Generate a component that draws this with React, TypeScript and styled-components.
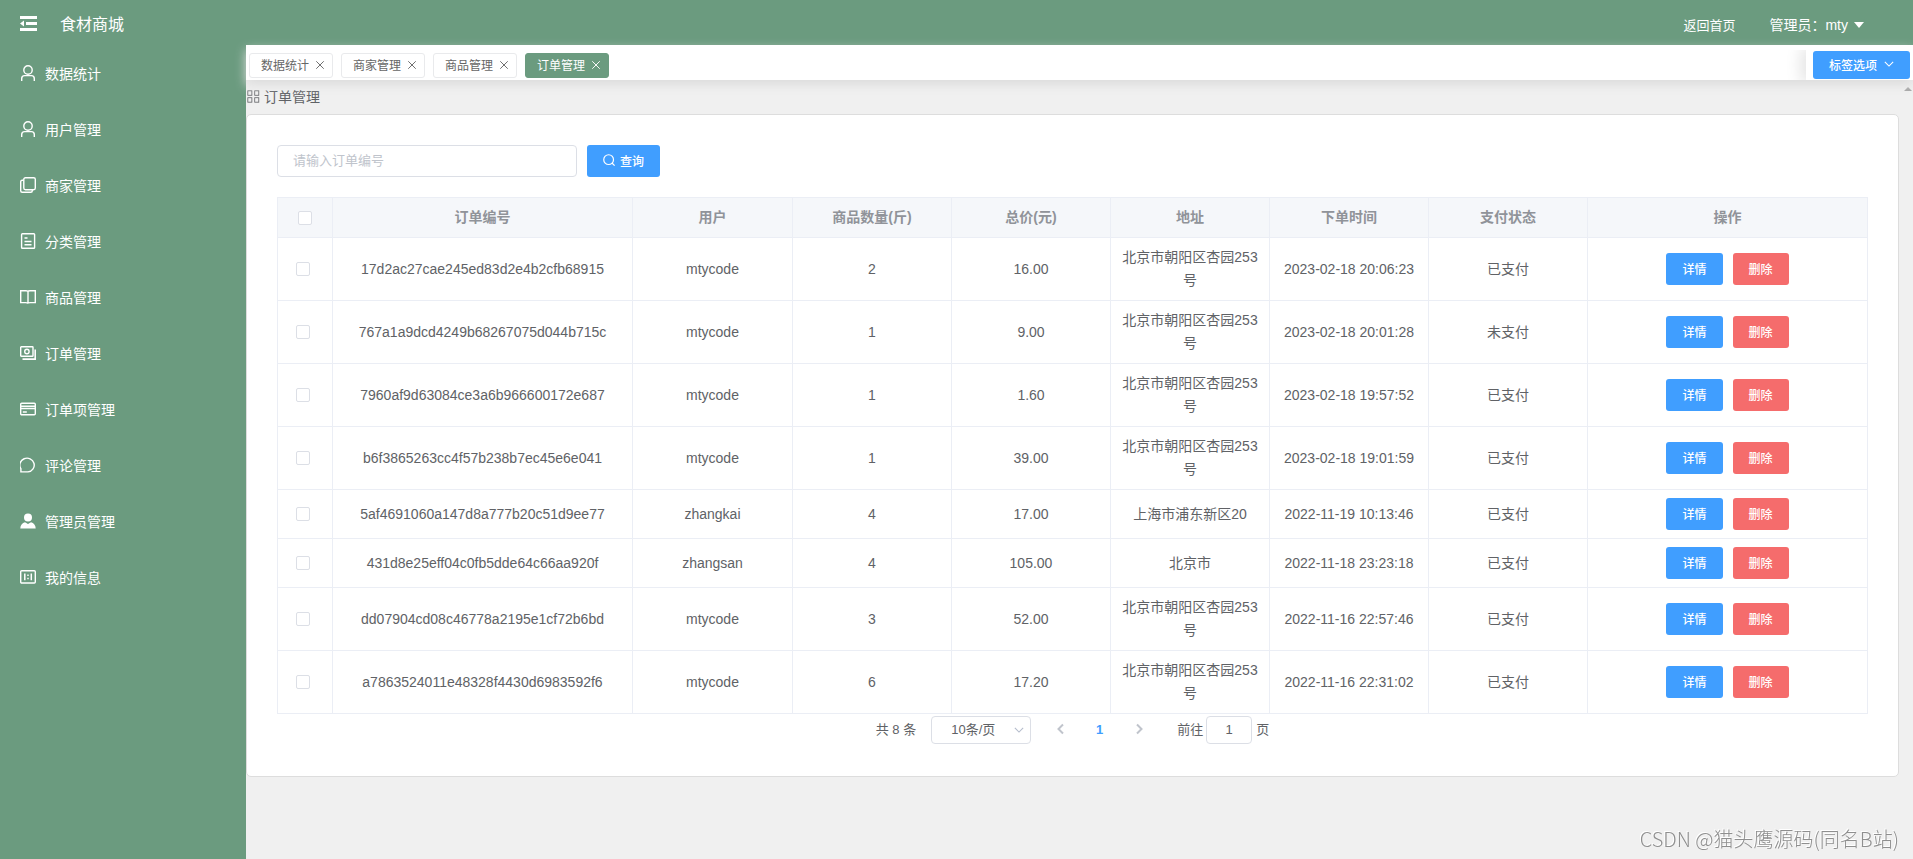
import React from 'react';
import styled, { createGlobalStyle, css } from 'styled-components';

const GREEN = '#6b9b7f';
const BLUE = '#409eff';
const RED = '#f56c6c';
const LINE = '#ebeef5';
const TEXT = '#606266';

const GlobalStyle = createGlobalStyle`
  *, *::before, *::after { box-sizing: border-box; }
  body {
    margin: 0;
    background: #f0f0f0;
    color: ${TEXT};
    font-family: "Liberation Sans", "Noto Sans CJK SC", sans-serif;
    font-size: 14px;
  }
  button, input, select { font-family: inherit; }
  a { color: inherit; text-decoration: none; }
`;

const Page = styled.div`
  display: flex;
  flex-direction: column;
  min-height: 100vh;
`;

const Header = styled.header`
  display: flex;
  align-items: center;
  height: 45px;
  padding: 3px 49px 0 18px;
  background: ${GREEN};
  color: #fff;
`;

const IconButton = styled.button`
  display: flex;
  padding: 0;
  border: 0;
  background: none;
  color: inherit;
  cursor: pointer;
`;

const Brand = styled.h1`
  flex: 1;
  margin: 0;
  padding: 2px 0 0 22px;
  font-size: 16px;
  font-weight: 400;
  line-height: 24px;
`;

const HomeLink = styled.a`
  margin-right: 34px;
  font-size: 13px;
`;

const UserMenu = styled.button`
  display: flex;
  align-items: center;
  gap: 6px;
  padding: 0;
  border: 0;
  background: none;
  color: #fff;
  font-size: 14px;
  cursor: pointer;
  svg { margin-top: 2px; }
`;

const Body = styled.div`
  display: flex;
  flex: 1;
`;

const Sidebar = styled.nav`
  flex: none;
  width: 246px;
  background: ${GREEN};
`;

const MenuLink = styled.a`
  display: flex;
  align-items: center;
  gap: 9px;
  height: 56px;
  padding-left: 20px;
  color: #fff;
  font-size: 14px;
`;

const Main = styled.main`
  flex: 1;
  min-width: 0;
`;

const TagsBar = styled.div`
  position: relative;
  display: flex;
  justify-content: space-between;
  height: 35px;
  padding-top: 5px;
  background: #fff;
  box-shadow: 0 5px 10px #ddd;
`;

const TagList = styled.ul`
  display: flex;
  gap: 8px;
  margin: 0;
  padding: 3px;
  list-style: none;
`;

const Tag = styled.li<{ $active?: boolean }>`
  display: flex;
  align-items: center;
  gap: 6px;
  width: 84px;
  height: 25px;
  padding: 0 0 2px 11px;
  border: 1px solid ${(p) => (p.$active ? GREEN : '#e9eaec')};
  border-radius: 3px;
  background: ${(p) => (p.$active ? GREEN : '#fff')};
  color: ${(p) => (p.$active ? '#fff' : '#666')};
  font-size: 12px;
  white-space: nowrap;
`;

const TagOptions = styled.div`
  padding: 1px 3px 1px 7px;
  background: #fff;
  box-shadow: -3px 0 15px 3px rgba(0, 0, 0, 0.1);
  clip-path: inset(0 0 0 -30px);
`;

const Button = styled.button<{ $color?: string; $compact?: boolean }>`
  display: inline-flex;
  align-items: center;
  justify-content: center;
  gap: ${(p) => (p.$compact ? 7 : 5)}px;
  height: ${(p) => (p.$compact ? 28 : 32)}px;
  padding: 0 16px 2px;
  border: 0;
  border-radius: 3px;
  background: ${(p) => p.$color ?? BLUE};
  color: #fff;
  font-size: 12px;
  font-weight: 500;
  white-space: nowrap;
  cursor: pointer;
`;

const Content = styled.div`
  display: grid;
  grid-template-columns: minmax(0, 1fr) 14px;
`;

const Crumb = styled.div`
  display: flex;
  align-items: center;
  gap: 4px;
  height: 34px;
  padding: 0 1px 2px;
  font-size: 14px;
`;

const ScrollCap = styled.div`
  padding: 7px 2px 0 5px;
  color: #a3a3a3;
  svg { display: block; }
`;

const Card = styled.section`
  padding: 30px;
  border: 1px solid #ddd;
  border-radius: 5px;
  background: #fff;
`;

const SearchForm = styled.form`
  display: flex;
  gap: 10px;
  margin-bottom: 20px;
`;

const field = css`
  border: 1px solid #dcdfe6;
  border-radius: 4px;
  background: #fff;
  color: ${TEXT};
  font-size: 13px;
  outline: none;
`;

const SearchInput = styled.input`
  ${field}
  width: 300px;
  height: 32px;
  padding: 0 15px 2px;
  &::placeholder { color: #c0c4cc; }
`;

const Table = styled.table`
  width: 100%;
  table-layout: fixed;
  border-collapse: separate;
  border-spacing: 0;
  border: solid ${LINE};
  border-width: 1px 0 0 1px;
  font-size: 14px;
`;

const cell = css`
  padding: 8px 10px;
  border: solid ${LINE};
  border-width: 0 1px 1px 0;
  line-height: 23px;
  text-align: center;
`;

const Th = styled.th`
  ${cell}
  background: #f5f7fa;
  color: #909399;
  font-weight: 700;
`;

const Td = styled.td`
  ${cell}
  overflow-wrap: anywhere;
`;

const CheckTd = styled(Td)`
  padding-right: 14px;
`;

const Check = styled.input`
  display: block;
  width: 14px;
  height: 14px;
  margin: 0 auto;
  border: 1px solid #dcdfe6;
  border-radius: 2px;
  background: #fff;
  appearance: none;
`;

const Actions = styled.div`
  display: flex;
  justify-content: center;
  gap: 10px;
`;

const Pager = styled.div`
  display: flex;
  align-items: center;
  justify-content: center;
  height: 32px;
  padding: 2px 5px;
  font-size: 13px;
`;

const Total = styled.span`
  margin-right: 15px;
  padding-bottom: 3px;
`;

const SizeBox = styled.span`
  ${field}
  display: flex;
  align-items: center;
  width: 100px;
  height: 28px;
  margin-right: 11px;
  padding-right: 6px;
  color: #b4bccc;
`;

const SizeSelect = styled.select`
  flex: 1;
  min-width: 0;
  height: 26px;
  padding: 0 0 2px 19px;
  border: 0;
  background: none;
  color: ${TEXT};
  font-size: 13px;
  appearance: none;
  outline: none;
`;

const PageButton = styled.button<{ $active?: boolean }>`
  display: flex;
  align-items: center;
  justify-content: center;
  width: 39px;
  height: 28px;
  padding: 0 2px 2px 0;
  border: 0;
  background: none;
  color: ${(p) => (p.$active ? BLUE : '#c0c4cc')};
  font-size: 13px;
  font-weight: 700;
`;

const Jump = styled.label`
  display: flex;
  align-items: center;
  margin-left: 18px;
`;

const JumpText = styled.span`
  padding-bottom: 3px;
`;

const JumpInput = styled.input`
  ${field}
  width: 46px;
  height: 28px;
  margin: 0 4px 0 3px;
  padding: 0 0 2px;
  text-align: center;
`;

const Watermark = styled.div`
  position: fixed;
  right: 14px;
  bottom: 6px;
  color: #8f8f8f;
  font-family: "Noto Sans CJK SC", sans-serif;
  font-size: 20px;
  font-weight: 300;
  line-height: 28px;
  text-shadow: -1px -1px 0 #fff;
`;

type IconName =
  | 'user' | 'copy' | 'tickets' | 'book' | 'money' | 'card'
  | 'chat' | 'custom' | 'scale' | 'grid' | 'search' | 'close';

const shapes: Record<IconName, React.ReactNode> = {
  user: (
    <>
      <circle cx="8" cy="5" r="4.200" />
      <path d="M1.700 16v-2.500q0-2.900 2.900-2.900h6.800q2.900 0 2.900 2.900V16" />
    </>
  ),
  copy: (
    <>
      <rect x="3.800" y=".7" width="11.500" height="12" rx="1.600" />
      <path d="M3.500 3.300H2.200Q.7 3.300.7 4.800v9q0 1.500 1.500 1.500h8.600q1.500 0 1.500-1.500v-1" />
    </>
  ),
  tickets: (
    <>
      <rect x="1.600" y=".7" width="13" height="14.600" rx=".8" />
      <path d="M4.500 5h3M4.500 8.500h7M4.500 11.800h7" />
    </>
  ),
  book: (
    <path d="M8 2.800v11.500M.7 1.700H6q2 0 2 1.100 0-1.100 2-1.100h5.300v11.900H10q-2 0-2 1-.1-1-2-1H.7z" />
  ),
  money: (
    <>
      <rect x=".7" y="1.700" width="12.300" height="9.600" rx=".6" />
      <circle cx="6.900" cy="6.500" r="2.200" />
      <path d="M15.200 4.500v9.600H2.500" strokeWidth="1.600" />
    </>
  ),
  card: (
    <>
      <rect x=".7" y="2.200" width="14.600" height="11.600" rx="1" />
      <path d="M.6 5.300h14.800M.6 7.500h14.800M2.800 11h4" />
    </>
  ),
  chat: <path d="M.9 14.900v-3.200A7.200 6.900 0 1 1 8 14.900z" />,
  custom: (
    <>
      <circle cx="8" cy="4.500" r="4" fill="currentColor" stroke="none" />
      <path d="M.3 15.500c0-3.500 1.900-5.500 4.700-6.300L8 11l3-1.800c2.800.8 4.700 2.800 4.700 6.300z" fill="currentColor" stroke="none" />
    </>
  ),
  scale: (
    <>
      <rect x=".7" y="1.800" width="14.600" height="12.200" rx="1" />
      <path d="M4.800 4.500v6.800M11.300 4.500v6.800M8 5.500v1.500M8 8.800v1.500" strokeWidth="1.500" />
    </>
  ),
  grid: (
    <>
      <rect x="1" y="1" width="5" height="5.500" />
      <rect x="9.500" y="1" width="5" height="5.500" />
      <rect x="1" y="9.500" width="5" height="5.500" />
      <rect x="9.500" y="9.500" width="5" height="5.500" />
    </>
  ),
  search: (
    <>
      <circle cx="7.500" cy="7.500" r="6.500" />
      <path d="m12 12 3.500 3.500" />
    </>
  ),
  close: <path d="m2 2 12 12M14 2 2 14" />,
};

const Icon = ({ name, size = 16, weight = 1.4 }: { name: IconName; size?: number; weight?: number }) => (
  <svg width={size} height={size} viewBox="0 0 16 16" fill="none" stroke="currentColor" strokeWidth={weight} aria-hidden="true">
    {shapes[name]}
  </svg>
);

const Chevron = ({ to, size, weight = 1.3 }: { to: 'down' | 'left' | 'right'; size: number; weight?: number }) => {
  const d = { down: 'm1 3.500 5 5 5-5', left: 'M8 1.500 3.500 6 8 10.500', right: 'M4 1.500 8.500 6 4 10.500' }[to];
  return (
    <svg width={size} height={size} viewBox="0 0 12 12" fill="none" stroke="currentColor" strokeWidth={weight} aria-hidden="true">
      <path d={d} />
    </svg>
  );
};

const menu: [IconName, string][] = [
  ['user', '数据统计'],
  ['user', '用户管理'],
  ['copy', '商家管理'],
  ['tickets', '分类管理'],
  ['book', '商品管理'],
  ['money', '订单管理'],
  ['card', '订单项管理'],
  ['chat', '评论管理'],
  ['custom', '管理员管理'],
  ['scale', '我的信息'],
];

const tags = ['数据统计', '商家管理', '商品管理', '订单管理'];

const columns = ['订单编号', '用户', '商品数量(斤)', '总价(元)', '地址', '下单时间', '支付状态', '操作'];

const orders = [
  ['17d2ac27cae245ed83d2e4b2cfb68915', 'mtycode', '2', '16.00', '北京市朝阳区杏园253号', '2023-02-18 20:06:23', '已支付'],
  ['767a1a9dcd4249b68267075d044b715c', 'mtycode', '1', '9.00', '北京市朝阳区杏园253号', '2023-02-18 20:01:28', '未支付'],
  ['7960af9d63084ce3a6b966600172e687', 'mtycode', '1', '1.60', '北京市朝阳区杏园253号', '2023-02-18 19:57:52', '已支付'],
  ['b6f3865263cc4f57b238b7ec45e6e041', 'mtycode', '1', '39.00', '北京市朝阳区杏园253号', '2023-02-18 19:01:59', '已支付'],
  ['5af4691060a147d8a777b20c51d9ee77', 'zhangkai', '4', '17.00', '上海市浦东新区20', '2022-11-19 10:13:46', '已支付'],
  ['431d8e25eff04c0fb5dde64c66aa920f', 'zhangsan', '4', '105.00', '北京市', '2022-11-18 23:23:18', '已支付'],
  ['dd07904cd08c46778a2195e1cf72b6bd', 'mtycode', '3', '52.00', '北京市朝阳区杏园253号', '2022-11-16 22:57:46', '已支付'],
  ['a7863524011e48328f4430d6983592f6', 'mtycode', '6', '17.20', '北京市朝阳区杏园253号', '2022-11-16 22:31:02', '已支付'],
];

export default function App() {
  return (
    <Page>
      <GlobalStyle />
      <Header>
        <IconButton type="button" aria-label="折叠菜单">
          <svg width="20" height="16" viewBox="0 0 20 16" fill="currentColor" aria-hidden="true">
            <path d="M2 0h17v3H2zM8 6h11v3H8zM2 12h17v3H2zM2 7.500 6 4.500v6z" />
          </svg>
        </IconButton>
        <Brand>食材商城</Brand>
        <HomeLink href="#home">返回首页</HomeLink>
        <UserMenu type="button">
          管理员：mty
          <svg width="10" height="6" viewBox="0 0 10 6" fill="currentColor" aria-hidden="true">
            <path d="M0 0h10L5 6z" />
          </svg>
        </UserMenu>
      </Header>
      <Body>
        <Sidebar>
          {menu.map(([icon, label]) => (
            <MenuLink href="#menu" key={label}>
              <Icon name={icon} />
              {label}
            </MenuLink>
          ))}
        </Sidebar>
        <Main>
          <TagsBar>
            <TagList>
              {tags.map((tag, i) => (
                <Tag key={tag} $active={i === tags.length - 1}>
                  <a href="#tag">{tag}</a>
                  <IconButton type="button" aria-label={`关闭${tag}`}>
                    <Icon name="close" size={10} weight={1.500} />
                  </IconButton>
                </Tag>
              ))}
            </TagList>
            <TagOptions>
              <Button type="button" $compact>
                标签选项
                <Chevron to="down" size={10} />
              </Button>
            </TagOptions>
          </TagsBar>
          <Content>
            <div>
              <Crumb>
                <Icon name="grid" size={13} weight={1} />
                订单管理
              </Crumb>
              <Card>
                <SearchForm>
                  <SearchInput type="text" placeholder="请输入订单编号" aria-label="订单编号" />
                  <Button type="button">
                    <Icon name="search" size={12} weight={1.600} />
                    查询
                  </Button>
                </SearchForm>
                <Table>
                  <colgroup>
                    <col width="55" />
                    <col width="300" />
                    <col width="160" />
                    <col span={5} />
                    <col width="280" />
                  </colgroup>
                  <thead>
                    <tr>
                      <Th><Check type="checkbox" aria-label="全选" /></Th>
                      {columns.map((c) => <Th key={c}>{c}</Th>)}
                    </tr>
                  </thead>
                  <tbody>
                    {orders.map((row) => (
                      <tr key={row[0]}>
                        <CheckTd><Check type="checkbox" aria-label={`选择 ${row[0]}`} /></CheckTd>
                        {row.map((value, i) => <Td key={i}>{value}</Td>)}
                        <Td>
                          <Actions>
                            <Button type="button">详情</Button>
                            <Button type="button" $color={RED}>删除</Button>
                          </Actions>
                        </Td>
                      </tr>
                    ))}
                  </tbody>
                </Table>
                <Pager>
                  <Total>共 8 条</Total>
                  <SizeBox>
                    <SizeSelect aria-label="每页条数" defaultValue="10">
                      <option value="10">10条/页</option>
                      <option value="20">20条/页</option>
                    </SizeSelect>
                    <Chevron to="down" size={10} />
                  </SizeBox>
                  <PageButton type="button" aria-label="上一页"><Chevron to="left" size={12} weight={2} /></PageButton>
                  <PageButton type="button" $active>1</PageButton>
                  <PageButton type="button" aria-label="下一页"><Chevron to="right" size={12} weight={2} /></PageButton>
                  <Jump>
                    <JumpText>前往</JumpText>
                    <JumpInput type="text" defaultValue="1" />
                    <JumpText>页</JumpText>
                  </Jump>
                </Pager>
              </Card>
            </div>
            <ScrollCap>
              <svg width="8" height="4" viewBox="0 0 8 4" fill="currentColor" aria-hidden="true">
                <path d="M0 4h8L4 0z" />
              </svg>
            </ScrollCap>
          </Content>
        </Main>
      </Body>
      <Watermark>CSDN @猫头鹰源码(同名B站)</Watermark>
    </Page>
  );
}
